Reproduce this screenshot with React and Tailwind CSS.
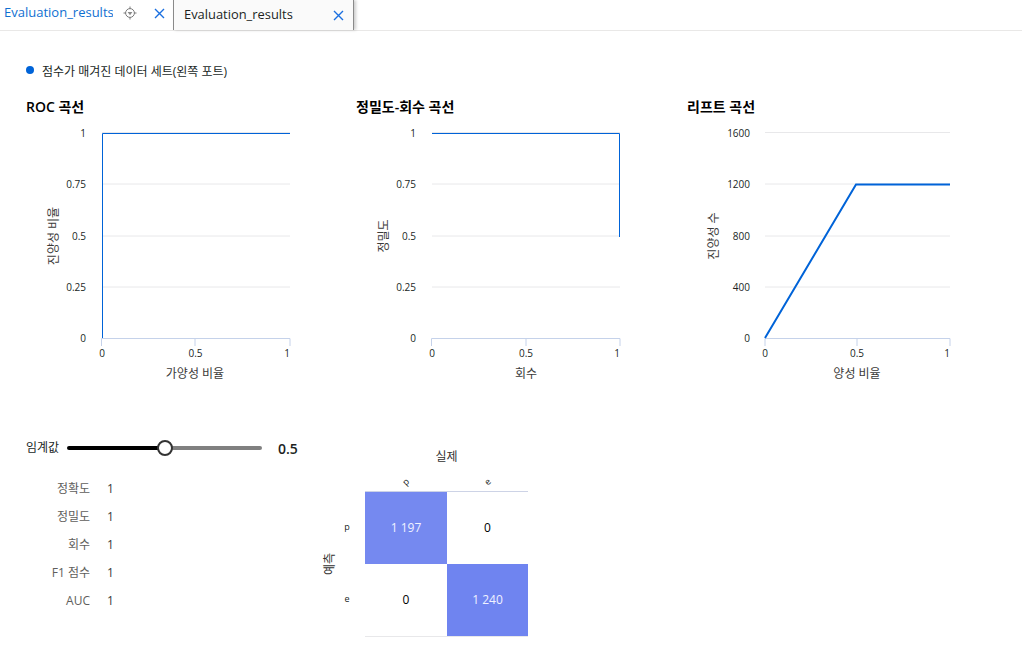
const FONT = '"Open Sans", "Noto Sans CJK KR", sans-serif'

const LINE = '#0063d8'

const CHARTS = [
  {
    title: 'ROC 곡선',
    yTitle: '진양성 비율',
    yTitleX: 32,
    xTitle: '가양성 비율',
    left: 76,
    right: 264,
    tickRight: 60,
    yTicks: ['1', '0.75', '0.5', '0.25', '0'],
    xLabels: [[76, '0'], [169.5, '0.5'], [261, '1']],
    xTicks: [75.5, 169, 264],
    curve: 'M76.5 218 V13.5 H264',
    strokeWidth: 1,
  },
  {
    title: '정밀도-회수 곡선',
    yTitle: '정밀도',
    yTitleX: 32,
    xTitle: '회수',
    left: 76,
    right: 264,
    tickRight: 60,
    yTicks: ['1', '0.75', '0.5', '0.25', '0'],
    xLabels: [[76, '0'], [170, '0.5'], [261, '1']],
    xTicks: [75.5, 170, 264],
    curve: 'M76 13.5 H263.5 V117',
    strokeWidth: 1,
  },
  {
    title: '리프트 곡선',
    yTitle: '진양성 수',
    yTitleX: 31,
    xTitle: '양성 비율',
    left: 78,
    right: 263,
    tickRight: 63,
    yTicks: ['1600', '1200', '800', '400', '0'],
    xLabels: [[78, '0'], [170, '0.5'], [260, '1']],
    xTicks: [78, 170, 263],
    curve: 'M78 218 L169 64.5 H263',
    strokeWidth: 2,
  },
]

const GRID_Y = [12.5, 64, 116, 167, 218]

function Chart({ chart }) {
  const mid = chart.xTicks[1]
  return (
    <div>
      <h2 className="text-[14px] leading-[20px] font-semibold text-black mt-[-1px]">{chart.title}</h2>
      <svg width="320" height="270" className="block mt-[3px]" style={{ fontFamily: FONT }}>
        {GRID_Y.slice(0, 4).map((y) => (
          <line key={y} x1={chart.left} x2={chart.right} y1={y} y2={y} stroke="#e8e8ea" strokeWidth="1" />
        ))}
        {chart.yTicks.map((t, i) => (
          <text key={t} x={chart.tickRight} y={GRID_Y[i] + 4} textAnchor="end" fontSize="10" fill="#201f1e">{t}</text>
        ))}
        <path d={`M${chart.xTicks[0]} 226 V218.5 H${chart.right} V226`} fill="none" stroke="#c5d2ea" />
        <line x1={mid} x2={mid} y1="218" y2="226" stroke="#c5d2ea" />
        {chart.xLabels.map(([x, t]) => (
          <text key={t} x={x} y={237} textAnchor="middle" fontSize="10" fill="#201f1e">{t}</text>
        ))}
        <text x={mid} y={258} textAnchor="middle" fontSize="12" fill="#3b3a39">{chart.xTitle}</text>
        <text
          transform={`translate(${chart.yTitleX} 116) rotate(-90)`}
          textAnchor="middle"
          fontSize="12"
          fill="#3b3a39"
        >
          {chart.yTitle}
        </text>
        <path d={chart.curve} fill="none" stroke={LINE} strokeWidth={chart.strokeWidth} />
      </svg>
    </div>
  )
}

function CloseIcon() {
  return (
    <svg width="11" height="11" viewBox="0 0 11 11" className="shrink-0">
      <path d="M1 1 L10 10 M10 1 L1 10" stroke="#1a6fe0" strokeWidth="1.4" fill="none" />
    </svg>
  )
}

function TargetIcon() {
  return (
    <svg width="14" height="14" viewBox="0 0 14 14" className="shrink-0">
      <circle cx="7" cy="7" r="4.4" fill="none" stroke="#7a7a7a" strokeWidth="1" />
      <path d="M7 0.5 V3 M7 11 V13.5 M0.5 7 H3 M11 7 H13.5" stroke="#7a7a7a" strokeWidth="1" />
      <path d="M4.6 6 H9.4 L7 9.2 Z" fill="#8a8a8a" />
    </svg>
  )
}

function Tabs() {
  return (
    <div className="flex h-[31px] border-b border-[#e9e8e7] bg-white">
      <div className="flex items-center w-[173px] pb-[4px] pl-[4px]">
        <span className="w-[109px] overflow-hidden whitespace-nowrap text-[13px] text-[#0f6fd1]">Evaluation_results</span>
        <span className="ml-[10px]"><TargetIcon /></span>
        <span className="ml-[17px]"><CloseIcon /></span>
      </div>
      <div className="flex items-center w-[181px] h-[30px] pl-[10px] pr-[9px] bg-[#fafafa] border-x border-[#8a8a8a] shadow-[2px_0_3px_rgba(0,0,0,0.2)]">
        <span className="flex-1 whitespace-nowrap text-[12.9px] text-[#201f1e]">Evaluation_results</span>
        <CloseIcon />
      </div>
    </div>
  )
}

function Slider() {
  return (
    <div className="flex items-center h-[20px]">
      <span className="w-[41px] text-[12px] text-[#201f1e]">임계값</span>
      <div className="relative flex w-[195px] h-[4px]">
        <div className="w-[98px] bg-black rounded-l-full" />
        <div className="flex-1 bg-[#808080] rounded-r-full" />
        <div className="absolute left-[90px] top-[-6px] w-[16px] h-[16px] rounded-full bg-white border-2 border-[#333333]" />
      </div>
      <span className="ml-[16px] text-[14px] font-semibold text-[#201f1e]">0.5</span>
    </div>
  )
}

const METRICS = [
  ['정확도', '1'],
  ['정밀도', '1'],
  ['회수', '1'],
  ['F1 점수', '1'],
  ['AUC', '1'],
]

function Metrics() {
  return (
    <div className="mt-[17px] flex flex-col">
      {METRICS.map(([label, value]) => (
        <div key={label} className="flex items-center h-[28px] text-[12px]">
          <span className="w-[64px] text-right text-[#605e5c]">{label}</span>
          <span className="ml-[17px] text-[#3b3a39]">{value}</span>
        </div>
      ))}
    </div>
  )
}

function Matrix() {
  return (
    <div className="flex mt-[9px]">
      <div className="w-[16px] h-[145px] mt-[44px] flex items-center justify-center">
        <span className="block rotate-[-90deg] text-[12px] whitespace-nowrap text-[#323130]">예측</span>
      </div>
      <div className="flex flex-col w-[18px] mt-[44px] mr-[9px] text-[9px] text-[#201f1e]">
        <span className="h-[72px] flex items-center justify-center">p</span>
        <span className="h-[72px] flex items-center justify-center">e</span>
      </div>
      <div className="w-[163px]">
        <div className="h-[20px] flex items-center justify-center text-[12px] text-[#323130]">실제</div>
        <div className="flex h-[24px] items-center pt-[6px] text-[9px] text-[#201f1e]">
          <span className="w-[82px] flex justify-center"><span className="block rotate-[-45deg]">p</span></span>
          <span className="flex-1 flex justify-center"><span className="block rotate-[-45deg]">e</span></span>
        </div>
        <div className="grid grid-cols-[82px_81px] grid-rows-[72px_72px] border-t border-[#cdd3e6] border-b-[1px] border-b-[#e8e8ea] text-[12px]">
          <div className="flex items-center justify-center bg-[#7589f0] text-[#f0f2ff]">1 197</div>
          <div className="flex items-center justify-center text-black">0</div>
          <div className="flex items-center justify-center text-black">0</div>
          <div className="flex items-center justify-center bg-[#6f84f0] text-[#f0f2ff]">1 240</div>
        </div>
      </div>
    </div>
  )
}

export default function App() {
  return (
    <div className="w-[1022px] h-[653px] overflow-hidden bg-white" style={{ fontFamily: FONT }}>
      <Tabs />
      <div className="pl-[26px]">
        <div className="flex items-center h-[20px] mt-[30px] text-[12px] text-[#201f1e]">
          <span className="w-[8px] h-[8px] rounded-full bg-[#0063d8] mt-[-2px]" />
          <span className="ml-[8px] mt-[1px]">점수가 매겨진 데이터 세트(왼쪽 포트)</span>
        </div>
        <div className="grid grid-cols-[330px_331px_1fr] mt-[17px]">
          {CHARTS.map((c) => (
            <Chart key={c.title} chart={c} />
          ))}
        </div>
        <div className="flex mt-[48px]">
          <div className="w-[296px]">
            <Slider />
            <Metrics />
          </div>
          <Matrix />
        </div>
      </div>
    </div>
  )
}
